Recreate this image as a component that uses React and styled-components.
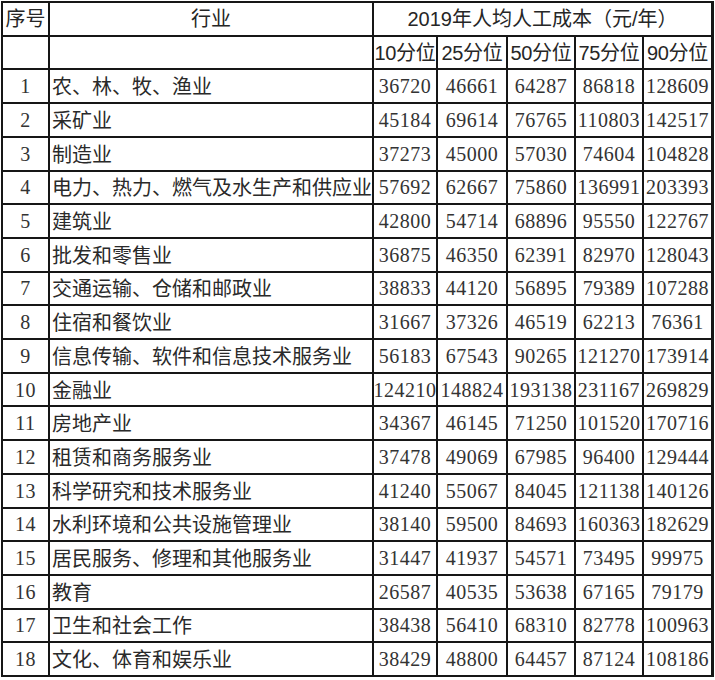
import React from 'react'
import styled, { createGlobalStyle } from 'styled-components'

const GlobalStyle = createGlobalStyle`
    html, body {
        margin: 0;
        padding: 0;
        background: #FFFFFF;
    }
`;

const rows = [
    ['1', '农、林、牧、渔业', 36720, 46661, 64287, 86818, 128609],
    ['2', '采矿业', 45184, 69614, 76765, 110803, 142517],
    ['3', '制造业', 37273, 45000, 57030, 74604, 104828],
    ['4', '电力、热力、燃气及水生产和供应业', 57692, 62667, 75860, 136991, 203393],
    ['5', '建筑业', 42800, 54714, 68896, 95550, 122767],
    ['6', '批发和零售业', 36875, 46350, 62391, 82970, 128043],
    ['7', '交通运输、仓储和邮政业', 38833, 44120, 56895, 79389, 107288],
    ['8', '住宿和餐饮业', 31667, 37326, 46519, 62213, 76361],
    ['9', '信息传输、软件和信息技术服务业', 56183, 67543, 90265, 121270, 173914],
    ['10', '金融业', 124210, 148824, 193138, 231167, 269829],
    ['11', '房地产业', 34367, 46145, 71250, 101520, 170716],
    ['12', '租赁和商务服务业', 37478, 49069, 67985, 96400, 129444],
    ['13', '科学研究和技术服务业', 41240, 55067, 84045, 121138, 140126],
    ['14', '水利环境和公共设施管理业', 38140, 59500, 84693, 160363, 182629],
    ['15', '居民服务、修理和其他服务业', 31447, 41937, 54571, 73495, 99975],
    ['16', '教育', 26587, 40535, 53638, 67165, 79179],
    ['17', '卫生和社会工作', 38438, 56410, 68310, 82778, 100963],
    ['18', '文化、体育和娱乐业', 38429, 48800, 64457, 87124, 108186],
];

const percentiles = ['10分位', '25分位', '50分位', '75分位', '90分位'];

const Table = styled.div`
    margin: 1px 0 0 1px;
    width: 713px;
    height: 676px;
    box-sizing: border-box;
    display: grid;
    grid-template-columns: 45px 322px 62px 68px 66px 66px 67px;
    grid-template-rows: repeat(20, 1fr);
    gap: 2px;
    padding: 2px;
    background: #161616;
`;

const Cell = styled.div`
    background: #FFFFFF;
    display: flex;
    align-items: center;
    justify-content: ${p => (p.$left ? 'flex-start' : 'center')};
    padding-left: ${p => (p.$left ? '2px' : '0')};
    grid-column: ${p => p.$span || 'auto'};
    white-space: nowrap;
    overflow: visible;
    color: #262626;
`;

const HeadText = styled.span`
    font-family: "Liberation Sans", "Noto Sans CJK SC", sans-serif;
    font-size: 20px;
    line-height: 1;
    letter-spacing: ${p => (p.$tight ? '-0.3px' : '0')};
`;

const NameText = styled.span`
    font-family: "Noto Sans CJK SC", sans-serif;
    font-size: 20px;
    line-height: 1;
    color: #2a2a2a;
`;

const NumText = styled.span`
    font-family: "Liberation Serif", serif;
    font-size: 20px;
    line-height: 1;
    letter-spacing: 0.5px;
    color: #333333;
`;

const App = () => {
    return (
        <>
            <GlobalStyle />
            <Table>
                <Cell><HeadText>序号</HeadText></Cell>
                <Cell><HeadText>行业</HeadText></Cell>
                <Cell $span="3 / 8"><HeadText>2019年人均人工成本（元/年）</HeadText></Cell>

                <Cell />
                <Cell />
                {percentiles.map(p => (
                    <Cell key={p}><HeadText $tight>{p}</HeadText></Cell>
                ))}

                {rows.map(([no, name, ...values]) => (
                    <React.Fragment key={no}>
                        <Cell><NumText>{no}</NumText></Cell>
                        <Cell $left><NameText>{name}</NameText></Cell>
                        {values.map((v, i) => (
                            <Cell key={i}><NumText>{v}</NumText></Cell>
                        ))}
                    </React.Fragment>
                ))}
            </Table>
        </>
    )
}

export default App
